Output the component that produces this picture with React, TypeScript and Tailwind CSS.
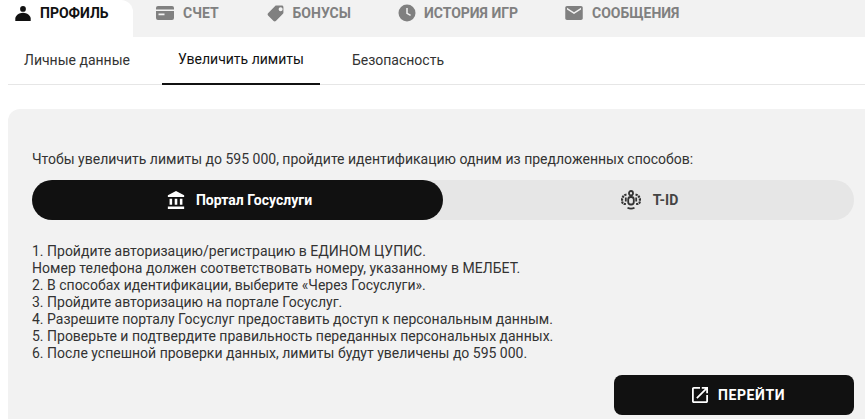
const font = "font-['Roboto',sans-serif]";

function PersonIcon() {
  return (
    <svg viewBox="0 0 16 15" className="w-[16px] h-[15px] fill-[#111111]">
      <circle cx="8" cy="2.900" r="2.900" />
      <path d="M0.300 15v-2.200C.3 9.600 4 6.800 8 6.800s7.700 2.800 7.700 6V15H.3z" />
    </svg>
  );
}

function CardIcon() {
  return (
    <svg viewBox="0 0 18 14" className="w-[18px] h-[14px] fill-[#808080]">
      <path d="M2 0h14a2 2 0 0 1 2 2v1.500H0V2a2 2 0 0 1 2-2z" />
      <path fillRule="evenodd" d="M0 5h18v7a2 2 0 0 1-2 2H2a2 2 0 0 1-2-2V5zM2.500 7.500v1.800h6V7.500h-6z" />
    </svg>
  );
}

function TagIcon() {
  return (
    <svg viewBox="0 0 24 24" className="w-[19px] h-[19px] fill-[#808080] rotate-90">
      <path d="M21.410 11.580l-9-9C12.050 2.220 11.550 2 11 2H4c-1.100 0-2 .9-2 2v7c0 .55.22 1.050.59 1.420l9 9c.36.36.86.58 1.410.58.55 0 1.050-.22 1.410-.59l7-7c.37-.36.59-.86.59-1.410 0-.55-.23-1.060-.59-1.420zM6.500 8C5.120 8 4 6.880 4 5.500S5.120 3 6.500 3 9 4.120 9 5.500 7.880 8 6.500 8z" />
    </svg>
  );
}

function ClockIcon() {
  return (
    <svg viewBox="0 0 18 18" className="w-[18px] h-[18px]">
      <circle cx="9" cy="9" r="8.500" className="fill-[#808080]" />
      <path d="M9 4v5.300l3.600 2" fill="none" stroke="#f2f2f2" strokeWidth="1.500" />
    </svg>
  );
}

function MailIcon() {
  return (
    <svg viewBox="2 4 20 16" className="w-[18px] h-[14px] fill-[#808080]">
      <path d="M20 4H4c-1.100 0-1.990.9-1.990 2L2 18c0 1.100.9 2 2 2h16c1.100 0 2-.9 2-2V6c0-1.100-.9-2-2-2zm0 4l-8 5-8-5V6l8 5 8-5v2z" />
    </svg>
  );
}

function BankIcon() {
  return (
    <svg viewBox="0 0 19 21" className="w-[18px] h-[18px] fill-white">
      <path d="M9.500 0L0 5v2h19V5L9.500 0zM2 9v7h3V9H2zm6 0v7h3V9H8zm6 0v7h3V9h-3zM0 18v3h19v-3H0z" />
    </svg>
  );
}

function TidIcon() {
  return (
    <svg viewBox="0 0 20 20" className="w-[20px] h-[20px]" fill="none" stroke="#333333" strokeWidth="1.800">
      <rect x="8" y="1" width="4" height="4.500" rx="2" />
      <rect x="7.200" y="7" width="5.600" height="7.500" rx="2.500" />
      <path d="M5.500 4.500C2.500 5 1 7.500 1 10.500s1.500 3.500 4.500 3.500" strokeDasharray="2.200 .8" strokeWidth="2.200" />
      <path d="M14.500 4.500c3 .5 4.500 3 4.500 6s-1.500 3.500-4.500 3.500" strokeDasharray="2.200 .8" strokeWidth="2.200" />
      <path d="M4.800 7.500v4M15.200 7.500v4" />
      <path d="M6.500 17.700c2 1 5 1 7 0" />
    </svg>
  );
}

function OpenIcon() {
  return (
    <svg viewBox="3 3 18 18" className="w-[16px] h-[16px] fill-white">
      <path d="M19 19H5V5h7V3H5c-1.110 0-2 .9-2 2v14c0 1.100.89 2 2 2h14c1.100 0 2-.9 2-2v-7h-2v7zM14 3v2h3.590l-9.830 9.830 1.410 1.410L19 6.410V10h2V3h-7z" />
    </svg>
  );
}

const steps = [
  "1. Пройдите авторизацию/регистрацию в ЕДИНОМ ЦУПИС.",
  "Номер телефона должен соответствовать номеру, указанному в МЕЛБЕТ.",
  "2. В способах идентификации, выберите «Через Госуслуги».",
  "3. Пройдите авторизацию на портале Госуслуг.",
  "4. Разрешите порталу Госуслуг предоставить доступ к персональным данным.",
  "5. Проверьте и подтвердите правильность переданных персональных данных.",
  "6. После успешной проверки данных, лимиты будут увеличены до 595 000.",
];

export default function App() {
  return (
    <div className={`${font} w-[865px] h-[419px] overflow-hidden bg-white`}>
      {/* top tabs */}
      <div className="flex h-[37px] bg-[#f2f2f2] text-[14px] font-bold text-[#808080]">
        <div className="flex items-center w-[133px] pl-[15px] pb-[11px] gap-[9px] bg-white rounded-tr-[12px] text-[#111111]">
          <PersonIcon />
          <span>ПРОФИЛЬ</span>
        </div>
        <div className="flex items-center ml-[23px] pb-[11px] gap-[9px]">
          <CardIcon />
          <span>СЧЕТ</span>
        </div>
        <div className="flex items-center ml-[47px] pb-[11px] gap-[8px]">
          <TagIcon />
          <span>БОНУСЫ</span>
        </div>
        <div className="flex items-center ml-[47px] pb-[11px] gap-[8px]">
          <ClockIcon />
          <span>ИСТОРИЯ ИГР</span>
        </div>
        <div className="flex items-center ml-[47px] pb-[11px] gap-[9px]">
          <MailIcon />
          <span>СООБЩЕНИЯ</span>
        </div>
      </div>

      {/* sub tabs */}
      <div className="flex ml-[8px] h-[48px] border-b border-[#e6e6e6] text-[14px] text-[#333333]">
        <div className="flex items-center px-[16px] pb-[1px]">Личные данные</div>
        <div className="flex items-center ml-[16px] px-[16px] pb-[1px] border-b-[2px] border-[#111111] h-[48px] text-[#111111]">
          Увеличить лимиты
        </div>
        <div className="flex items-center ml-[16px] px-[16px] pb-[1px]">Безопасность</div>
      </div>

      {/* panel */}
      <div className="ml-[8px] mt-[24px] h-[400px] bg-[#f2f2f2] rounded-tl-[12px] pt-[41px] pl-[24px] pr-[11px] text-[14px] text-[#333333]">
        <p className="leading-[18px]">
          Чтобы увеличить лимиты до 595 000, пройдите идентификацию одним из предложенных способов:
        </p>
        <div className="flex h-[40px] mt-[12px] rounded-[20px] bg-[#e6e6e6] font-bold">
          <div className="flex items-center justify-center gap-[11px] w-[411px] pl-[4px] rounded-[20px] bg-[#111111] text-white">
            <BankIcon />
            <span>Портал Госуслуги</span>
          </div>
          <div className="flex flex-1 items-center justify-center gap-[12px] pl-[2px] text-[#444444]">
            <TidIcon />
            <span>T-ID</span>
          </div>
        </div>
        <div className="mt-[23px] leading-[17px]">
          {steps.map((s, i) => (
            <div key={s} className={i === 1 ? "tracking-[0.03px]" : ""}>
              {s}
            </div>
          ))}
        </div>
        <div className="flex justify-end mt-[13px]">
          <button className="flex items-center justify-center gap-[10px] w-[240px] h-[40px] pl-[9px] rounded-[8px] bg-[#111111] text-white text-[14px] font-bold tracking-[0.6px]">
            <OpenIcon />
            <span>ПЕРЕЙТИ</span>
          </button>
        </div>
      </div>
    </div>
  );
}
